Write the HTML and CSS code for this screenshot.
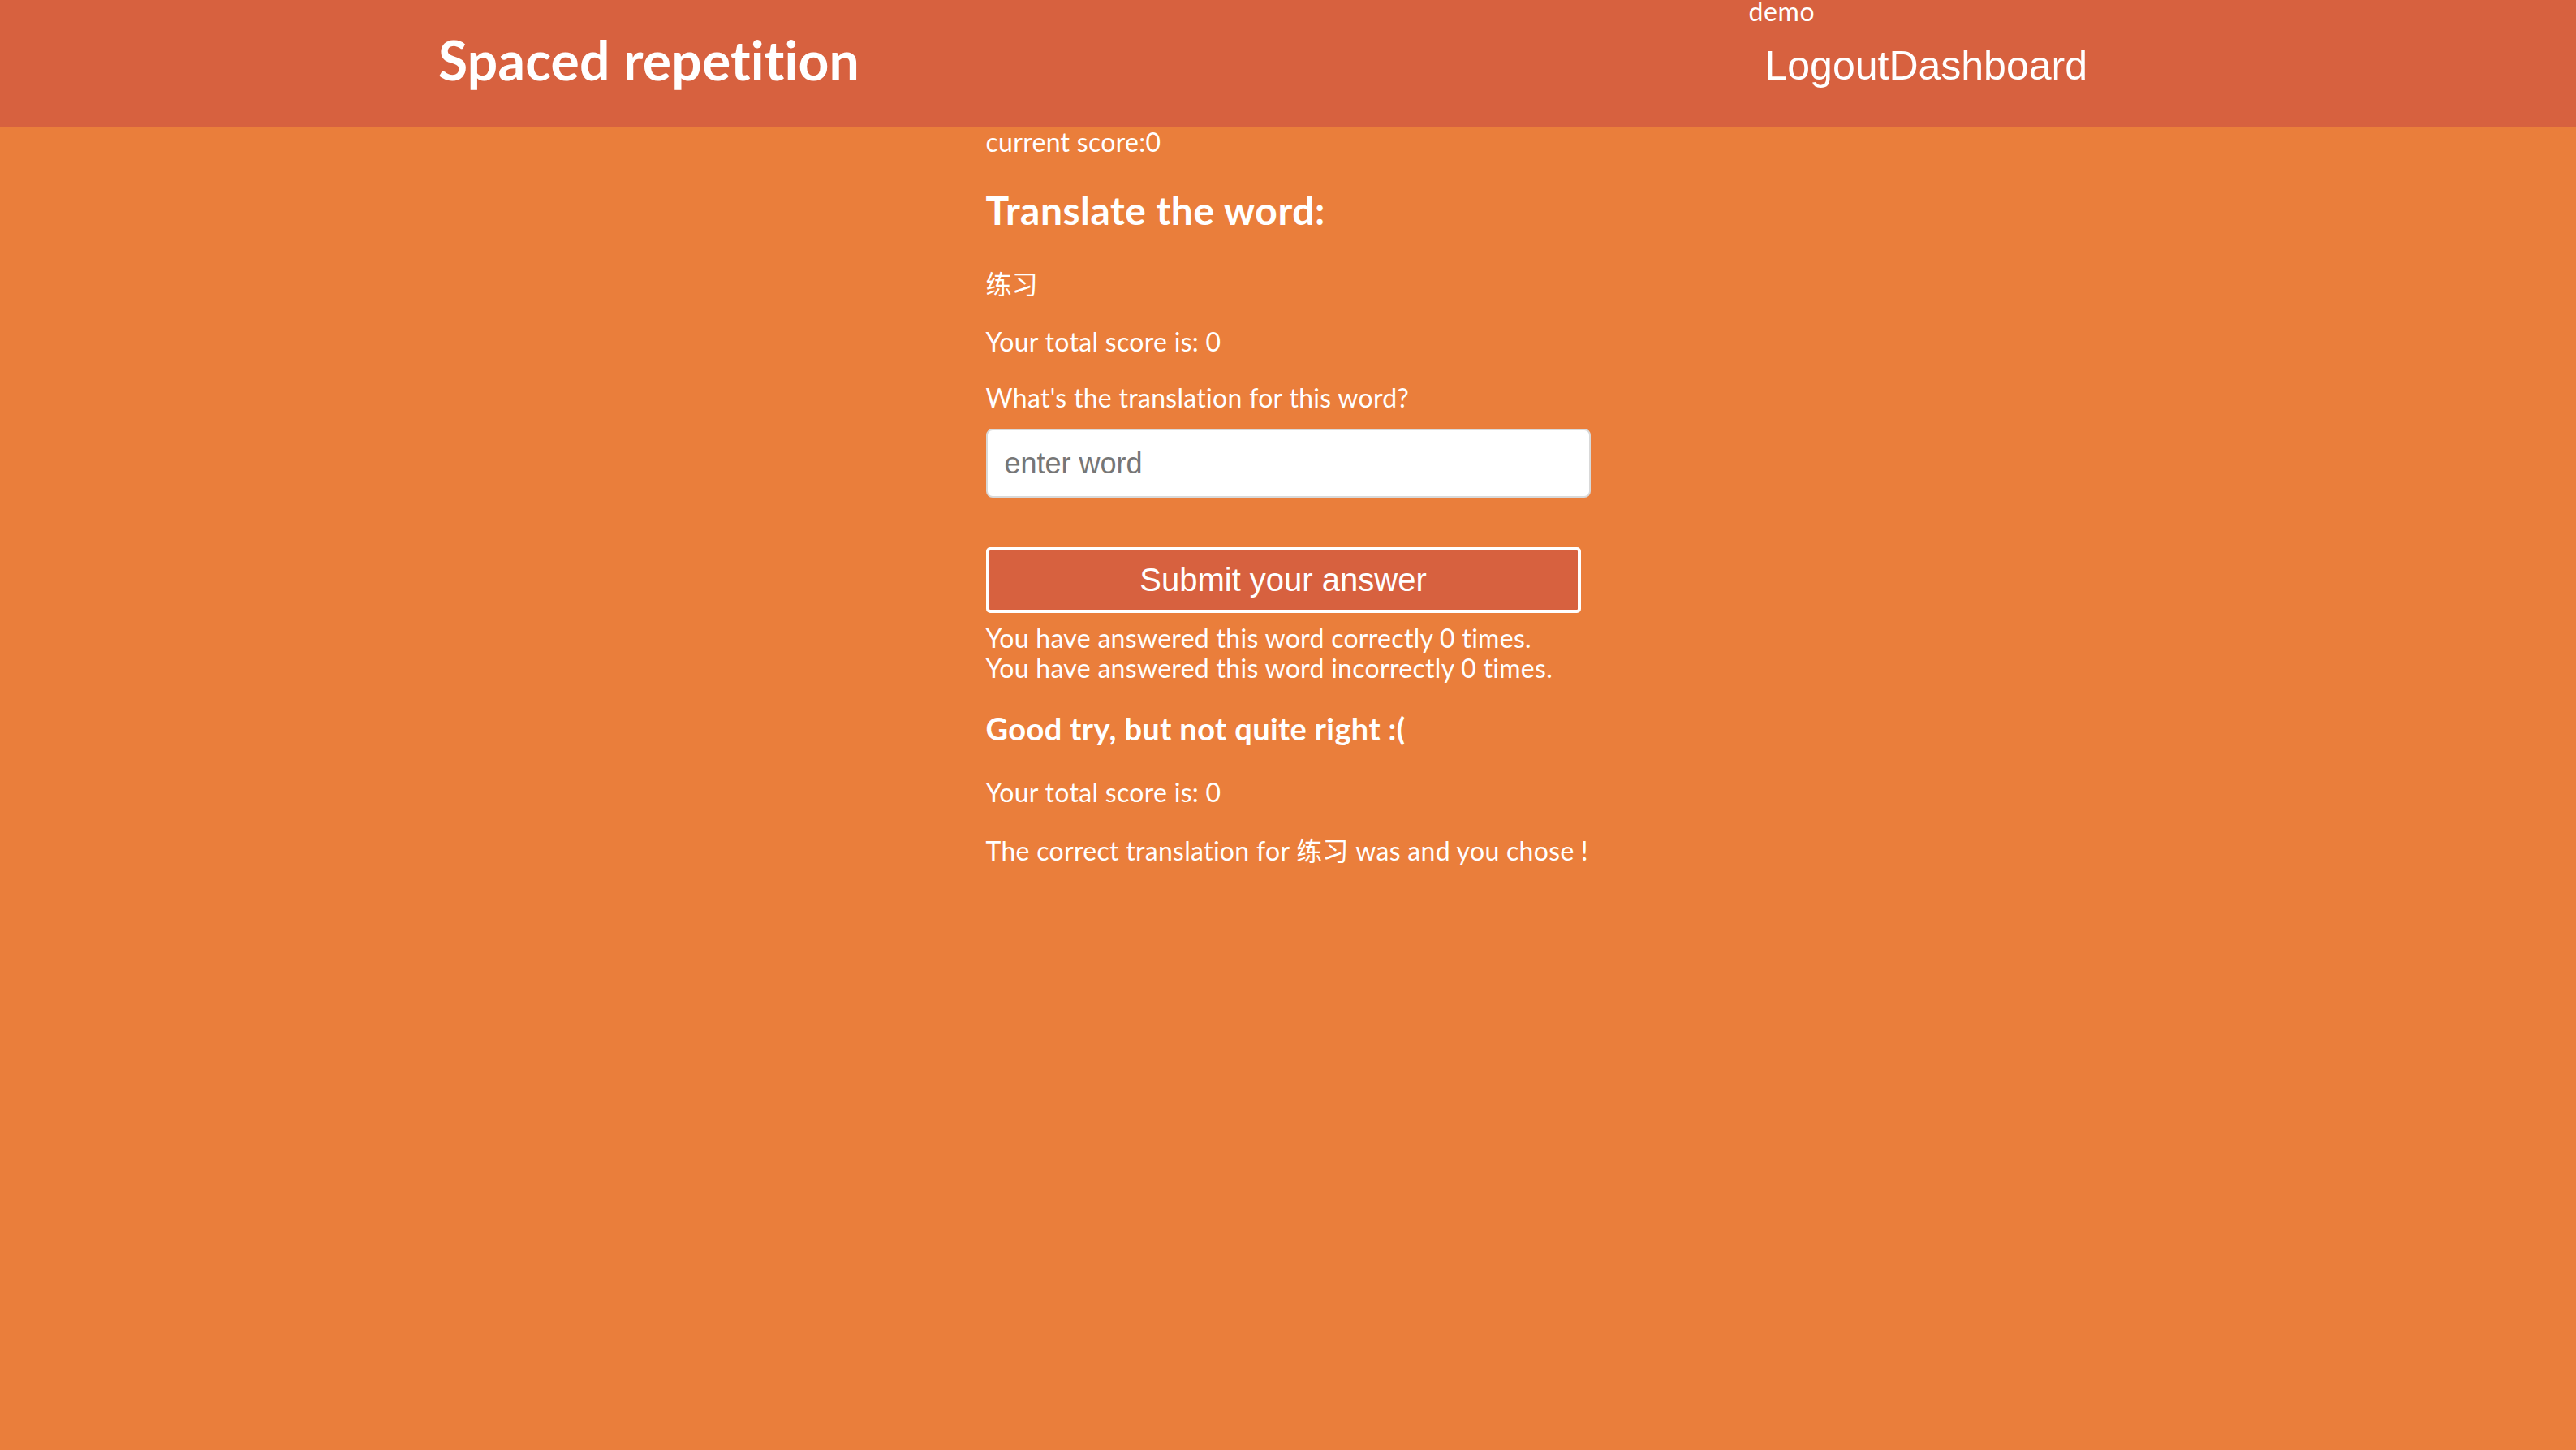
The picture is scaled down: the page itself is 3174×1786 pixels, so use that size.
FILE: index.html
```html
<!DOCTYPE html>
<html lang="en">
<head>
<meta charset="utf-8">
<title>Spaced repetition</title>
<link rel="stylesheet" href="styles.css">
</head>
<body>
<header class="top-bar">
  <h1 class="brand">Spaced repetition</h1>
  <nav class="nav">
    <span class="nav-user">demo</span>
    <div class="nav-links"><a class="nav-link" href="#">Logout</a><a class="nav-link" href="#">Dashboard</a></div>
  </nav>
</header>
<main class="quiz">
  <div class="current-score">current score:0</div>
  <h2 class="quiz-title">Translate the word:</h2>
  <p class="word">练习</p>
  <p class="total">Your total score is: 0</p>
  <form class="answer-form">
    <label class="question" for="guess">What's the translation for this word?</label>
    <input class="guess-input" id="guess" type="text" placeholder="enter word">
    <button class="submit-btn" type="button">Submit your answer</button>
  </form>
  <div class="counts">
    <div>You have answered this word correctly 0 times.</div>
    <div>You have answered this word incorrectly 0 times.</div>
  </div>
  <h3 class="feedback-title">Good try, but not quite right :(</h3>
  <p class="total total-after">Your total score is: 0</p>
  <p class="correct">The correct translation for 练习 was  and you chose !</p>
</main>
</body>
</html>
```
FILE: styles.css
```css
html, body {
  margin: 0;
  padding: 0;
}
body {
  background: #ea7e3b;
  color: #ffffff;
  font-family: Lato, "Noto Sans CJK SC", sans-serif;
  font-size: 32px;
  line-height: 37px;
  letter-spacing: 0.3px;
  min-height: 1786px;
}
.top-bar {
  background: #d7613f;
  height: 156px;
  box-sizing: border-box;
  padding: 0 602px 0 540px;
  display: flex;
  justify-content: space-between;
  align-items: flex-start;
}
.brand {
  align-self: center;
  margin: 0 0 8px;
  font-size: 66px;
  line-height: 76px;
  font-weight: 700;
  letter-spacing: 0.2px;
}
.nav {
  display: flex;
  flex-direction: column;
  align-items: flex-start;
}
.nav-user {
  font-size: 32px;
  line-height: 28px;
  letter-spacing: 0.6px;
}
.nav-links {
  margin-top: 25px;
  margin-left: 20px;
  font-family: "Liberation Sans", Arial, sans-serif;
  font-size: 50px;
  line-height: 57px;
  letter-spacing: 0;
}
.nav-link {
  color: #ffffff;
  text-decoration: none;
}
.quiz {
  width: 745px;
  margin: 0 auto;
}
.current-score {
  margin: 0;
}
.quiz-title {
  font-size: 48px;
  line-height: 55px;
  font-weight: 700;
  letter-spacing: 0.5px;
  margin: 38px 0 45px;
}
.word {
  margin: 0 0 34px;
}
.total {
  margin: 0 0 32px;
}
.answer-form {
  display: flex;
  flex-direction: column;
  align-items: flex-start;
}
.question {
  display: block;
  margin-bottom: 20px;
}
.guess-input {
  box-sizing: border-box;
  width: 745px;
  height: 85px;
  padding: 0 21px;
  border: 2px solid #d9d9d9;
  border-radius: 8px;
  background: #ffffff;
  font-family: "Liberation Sans", Arial, sans-serif;
  font-size: 36px;
  letter-spacing: 0;
  color: #333333;
  outline: none;
}
.guess-input::placeholder {
  color: #767676;
}
.submit-btn {
  box-sizing: border-box;
  margin-top: 61px;
  width: 733px;
  height: 81px;
  background: #d7613f;
  border: 4px solid #ffffff;
  border-radius: 5px;
  color: #ffffff;
  font-family: "Liberation Sans", Arial, sans-serif;
  font-size: 40px;
  letter-spacing: 0;
  padding: 0;
}
.counts {
  margin-top: 12px;
}
.feedback-title {
  font-size: 38px;
  line-height: 44px;
  font-weight: 700;
  letter-spacing: 0.4px;
  margin: 34px 0 38px;
}
.total-after {
  margin-bottom: 35px;
}
.correct {
  margin: 0;
}
```
